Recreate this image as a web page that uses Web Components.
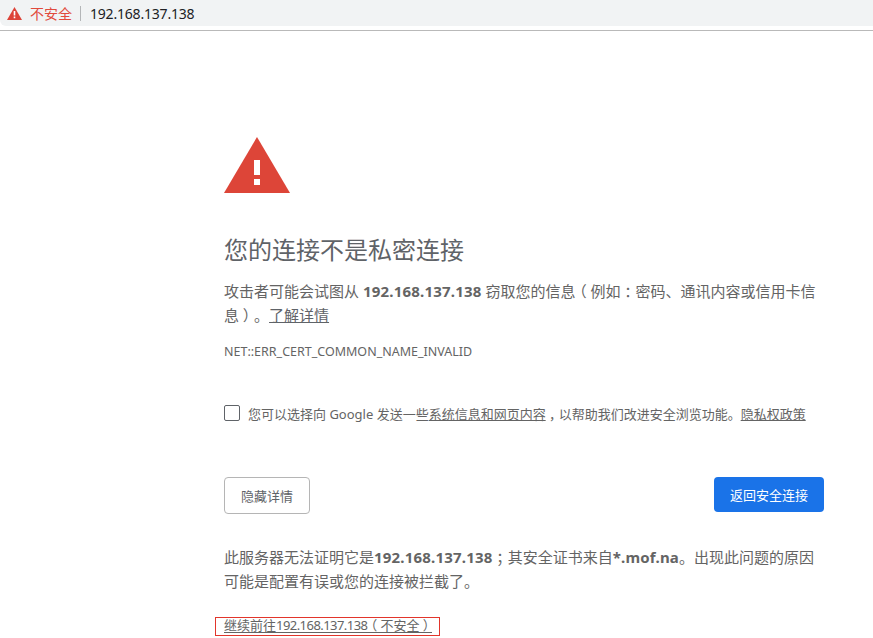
<!DOCTYPE html>
<html lang="zh-CN">
<head>
<meta charset="utf-8">
<title>隐私设置错误</title>
<style>
  html, body { margin: 0; background: #fff; overflow: hidden; }
  body { font-family: "Noto Sans", "Noto Sans CJK SC", sans-serif; text-spacing-trim: space-all; }
</style>
</head>
<body>
<browser-bar host-name="192.168.137.138" warning="不安全"></browser-bar>
<privacy-page>
  <warning-icon></warning-icon>
  <h-title>您的连接不是私密连接</h-title>
  <page-text>攻击者可能会试图从 <b>192.168.137.138</b> 窃取您的信息<cn-punct>（</cn-punct>例如<cn-punct>：</cn-punct>密码、通讯内容或信用卡信息<cn-punct>）</cn-punct>。<a>了解详情</a></page-text>
  <err-code>NET::ERR_CERT_COMMON_NAME_INVALID</err-code>
  <opt-in>您可以选择向 Google 发送一些<a>系统信息和网页内容</a><cn-punct>，</cn-punct>以帮助我们改进安全浏览功能。<a>隐私权政策</a></opt-in>
  <button-row></button-row>
  <details-text>此服务器无法证明它是<b>192.168.137.138</b><cn-punct>；</cn-punct>其安全证书来自<b>*.mof.na</b>。出现此问题的原因可能是配置有误或您的连接被拦截了。</details-text>
  <proceed-link>继续前往<i>192.168.137.138</i><cn-punct>（</cn-punct>不安全<cn-punct>）</cn-punct></proceed-link>
</privacy-page>

<script>
const cjk = `"Noto Sans", "Noto Sans CJK SC", sans-serif`;

// full width marks sit in the middle of their box in the reference
class CnPunct extends HTMLElement {
  constructor() {
    super();
    this.attachShadow({ mode: 'open' }).innerHTML = `
      <style>
        :host { display: inline-block; width: 1em; text-align: center; font-feature-settings: "halt"; }
      </style>
      <slot></slot>`;
  }
}

class BrowserBar extends HTMLElement {
  constructor() {
    super();
    this.attachShadow({ mode: 'open' }).innerHTML = `
      <style>
        :host { display: block; height: 31px; box-sizing: border-box; border-bottom: 1px solid #b9b9b9; font-family: ${cjk}; }
        .omnibox { height: 26px; background: #f1f3f4; display: flex; align-items: center; padding-left: 7px; border-bottom-left-radius: 6px; }
        svg { width: 15px; height: 13px; display: block; }
        .warn { color: #e14a3c; font-size: 14px; margin-left: 8px; }
        .sep { width: 1px; height: 15px; background: #b4b6b8; margin: 0 9px 0 8px; }
        .host { color: #202124; font-size: 14px; letter-spacing: -0.2px; }
      </style>
      <div class="omnibox">
        <svg viewBox="0 0 15 13"><path fill="#dd4338" d="M7.5 0 15 13H0z"/><path fill="#fff" d="M6.7 4h1.6v4.6H6.7zM6.7 9.6h1.6v1.6H6.7z"/></svg>
        <span class="warn"></span><span class="sep"></span><span class="host"></span>
      </div>`;
  }
  connectedCallback() {
    this.shadowRoot.querySelector('.warn').textContent = this.getAttribute('warning');
    this.shadowRoot.querySelector('.host').textContent = this.getAttribute('host-name');
  }
}

class PrivacyPage extends HTMLElement {
  constructor() {
    super();
    this.attachShadow({ mode: 'open' }).innerHTML = `
      <style>
        :host { display: block; width: 600px; margin-left: 224px; padding-top: 106px; color: #646464; font-family: ${cjk}; }
      </style>
      <slot></slot>`;
  }
}

class WarningIcon extends HTMLElement {
  constructor() {
    super();
    this.attachShadow({ mode: 'open' }).innerHTML = `
      <style>
        :host { display: block; height: 56px; }
        svg { display: block; width: 66px; height: 56px; }
      </style>
      <svg viewBox="0 0 66 56"><path fill="#dd4538" d="M33 0 66 56H0z"/><path fill="#fff" d="M30 23h6v15h-6zM30 42h6v6h-6z"/></svg>`;
  }
}

class HTitle extends HTMLElement {
  constructor() {
    super();
    this.attachShadow({ mode: 'open' }).innerHTML = `
      <style>
        :host { display: block; margin-top: 40px; font-size: 24px; line-height: 33px; color: #5f6368; }
      </style>
      <slot></slot>`;
  }
}

class PageText extends HTMLElement {
  constructor() {
    super();
    this.attachShadow({ mode: 'open' }).innerHTML = `
      <style>
        :host { display: block; margin-top: 13px; font-size: 15px; line-height: 24px; }
        ::slotted(b) { font-weight: 700; letter-spacing: 0.2px; }
        ::slotted(a) { text-decoration: underline; color: #5f6368; }
      </style>
      <slot></slot>`;
  }
}

class ErrCode extends HTMLElement {
  constructor() {
    super();
    this.attachShadow({ mode: 'open' }).innerHTML = `
      <style>
        :host { display: block; margin-top: 17px; font-size: 12.5px; line-height: 16px; }
      </style>
      <slot></slot>`;
  }
}

class OptIn extends HTMLElement {
  constructor() {
    super();
    this.attachShadow({ mode: 'open' }).innerHTML = `
      <style>
        :host { display: flex; align-items: center; gap: 8px; margin-top: 43px; font-size: 13px; line-height: 18px; white-space: nowrap; }
        .box { width: 14px; height: 14px; border: 1px solid #5f6368; border-radius: 2px; flex: none; }
        .line { display: block; padding-top: 2px; }
        ::slotted(a) { text-decoration: underline; }
      </style>
      <span class="box"></span><span class="line"><slot></slot></span>`;
  }
}

class ButtonRow extends HTMLElement {
  constructor() {
    super();
    this.attachShadow({ mode: 'open' }).innerHTML = `
      <style>
        :host { display: flex; justify-content: space-between; align-items: flex-start; margin-top: 54px; }
        button { box-sizing: border-box; border-radius: 4px; font: 13px ${cjk}; padding: 0; }
        .hide { width: 86px; background: #fff; border: 1px solid #b5b5b5; color: #5f6368; height: 37px; }
        .back { width: 110px; background: #1a73e8; border: 0; color: #fff; height: 35px; }
      </style>
      <button class="hide">隐藏详情</button>
      <button class="back">返回安全连接</button>`;
  }
}

class DetailsText extends HTMLElement {
  constructor() {
    super();
    this.attachShadow({ mode: 'open' }).innerHTML = `
      <style>
        :host { display: block; margin-top: 31px; font-size: 15px; line-height: 24px; }
        ::slotted(b) { font-weight: 700; letter-spacing: 0.2px; }
      </style>
      <slot></slot>`;
  }
}

class ProceedLink extends HTMLElement {
  constructor() {
    super();
    this.attachShadow({ mode: 'open' }).innerHTML = `
      <style>
        :host { display: block; width: fit-content; margin: 24px 0 0 -9px; padding: 1px 7px 2px 8px; border: 1px solid #e2352b; font-size: 13px; line-height: 13px; white-space: nowrap; }
        span { display: block; border-bottom: 1px solid #646464; }
        ::slotted(i) { font-style: normal; letter-spacing: -0.55px; }
      </style>
      <span><slot></slot></span>`;
  }
}

customElements.define('cn-punct', CnPunct);
customElements.define('browser-bar', BrowserBar);
customElements.define('privacy-page', PrivacyPage);
customElements.define('warning-icon', WarningIcon);
customElements.define('h-title', HTitle);
customElements.define('page-text', PageText);
customElements.define('err-code', ErrCode);
customElements.define('opt-in', OptIn);
customElements.define('button-row', ButtonRow);
customElements.define('details-text', DetailsText);
customElements.define('proceed-link', ProceedLink);
</script>
</body>
</html>
